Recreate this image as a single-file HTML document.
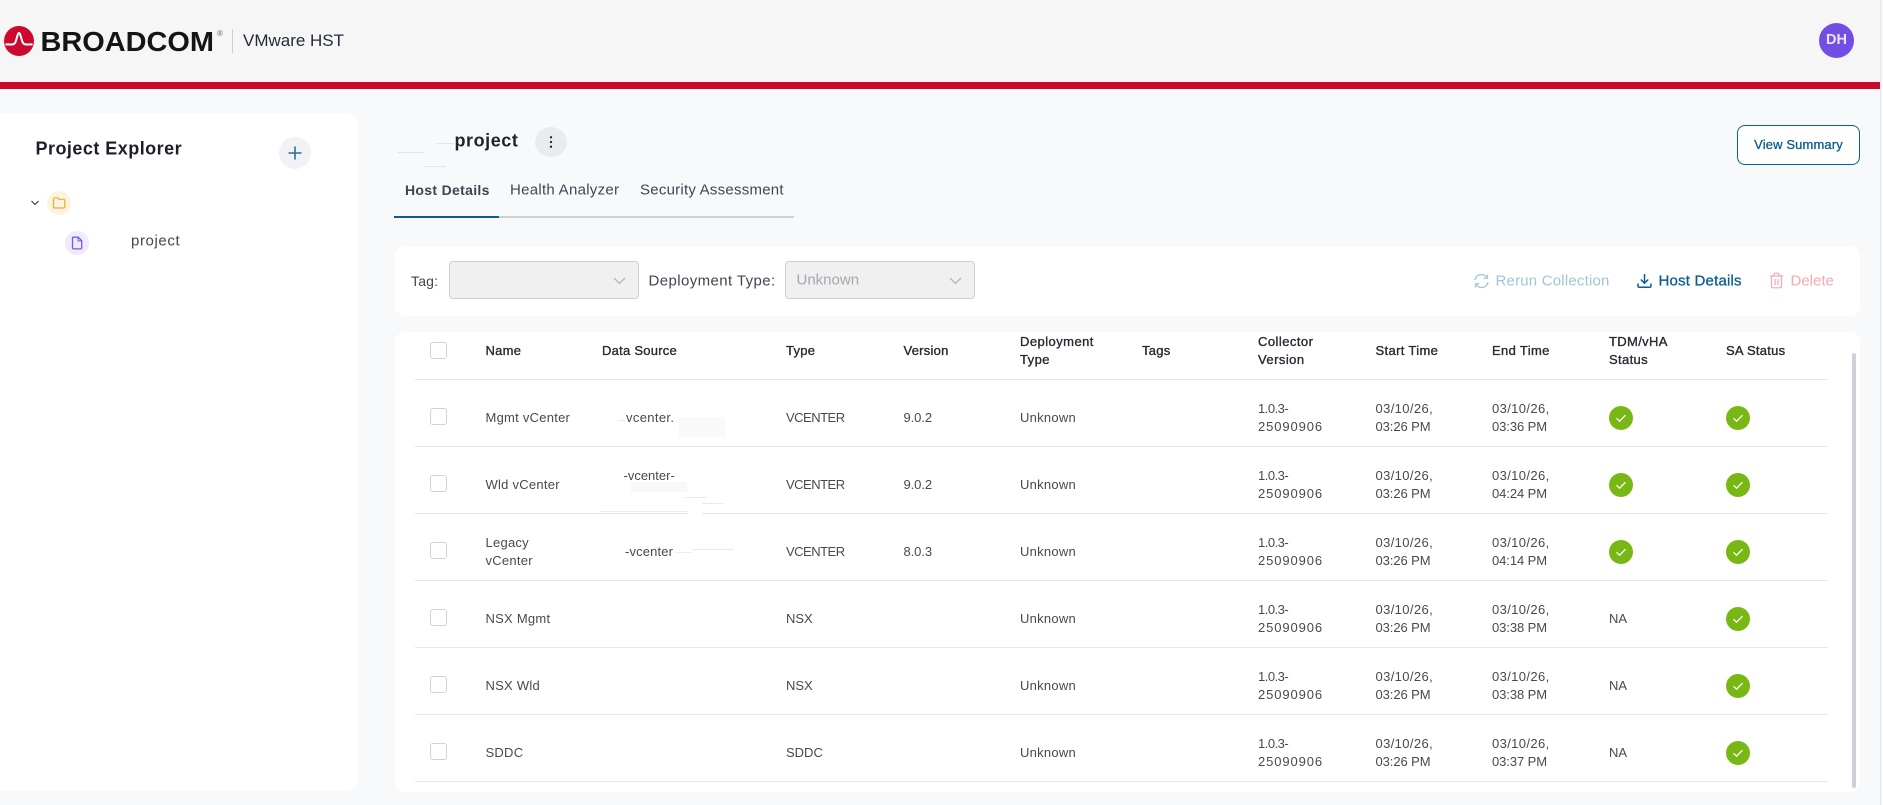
<!DOCTYPE html>
<html lang="en"><head><meta charset="utf-8"><title>VMware HST</title>
<style>
html,body{margin:0;padding:0;width:1883px;height:805px;overflow:hidden;background:#f8f9fb;font-family:"Liberation Sans",sans-serif;color:#3f4650}
.a{position:absolute}
.t{position:absolute;white-space:nowrap;transform:translateY(-50%)}
.panel{position:absolute;background:#fff;border-radius:12px}
.m{-webkit-text-stroke:.3px currentColor}
.row{position:absolute;left:395px;width:1465px;height:67px}
.row:after{content:"";position:absolute;left:20px;width:1413px;top:66px;height:1px;background:#e6e7ea}
.c{position:absolute;top:38px;transform:translateY(-50%);font-size:13px;line-height:18px;white-space:nowrap;color:#444a53}
.h{color:#262b33;-webkit-text-stroke:.35px #262b33;letter-spacing:.25px}
.cb{position:absolute;left:35px;top:28px;width:15px;height:15px;border:1.5px solid #ced2d8;border-radius:3px;background:#fff}
.ok{position:absolute;top:26px;width:24px;height:24px}
.n1{left:90.5px;letter-spacing:.25px}.n2{left:207px}.n3{left:391px}.n4{left:508.5px}.n5{left:625px}.n6{left:747px}.n7{left:863px}.n8{left:980.5px}.n9{left:1097px}.n10{left:1214px}.n11{left:1331px}
.dig{letter-spacing:.9px}
.vc{letter-spacing:-.5px}
.dt{letter-spacing:.37px}
.tm{letter-spacing:-.08px}
.sel{position:absolute;top:261px;height:36px;width:188px;background:#f0f0f0;border:1px solid #c9ced6;border-radius:4px}
.smear{position:absolute;background:#f6f7f8}
</style></head><body>

<div class="a" style="left:0;top:0;width:1883px;height:82px;background:#f6f6f6"></div>
<div class="a" style="left:0;top:82px;width:1880px;height:7px;background:#cb092f"></div>
<div class="a" style="left:1880px;top:0;width:1px;height:805px;background:#e6e6e6"></div>

<svg class="a" style="left:0;top:0" width="360" height="82" viewBox="0 0 360 82">
<circle cx="19" cy="41" r="15" fill="#cc092f"/>
<path d="M5.5 44.5C10 44 13.5 45.5 15 43C16.7 40 17.5 33 19 33C20.5 33 21.3 40 23 43C24.5 45.5 28 44 32.5 44.5" fill="none" stroke="#fff" stroke-width="2"/>
<text x="40.5" y="51" font-family="Liberation Sans" font-weight="700" font-size="28" fill="#151515" textLength="173.5" lengthAdjust="spacingAndGlyphs">BROADCOM</text>
<text x="217" y="36" font-family="Liberation Sans" font-size="8" fill="#666">®</text>
<rect x="232" y="29" width="1" height="24" fill="#c9ced6"/>
<text x="243" y="46" font-family="Liberation Sans" font-size="17" fill="#1f2b38" textLength="101" lengthAdjust="spacingAndGlyphs">VMware HST</text>
</svg>

<div class="a" style="left:1819px;top:23px;width:35px;height:35px;border-radius:50%;background:#724ee5;color:#e9e5fb;font-size:14.5px;font-weight:700;line-height:35px;text-align:center">DH</div>

<!-- sidebar -->
<div class="panel" style="left:-10px;top:113px;width:368px;height:678px"></div>
<div class="t" style="left:35.5px;top:148.500px;font-size:18px;font-weight:700;letter-spacing:.47px;color:#1b1f2a">Project Explorer</div>
<div class="a" style="left:279px;top:137px;width:32px;height:32px;border-radius:50%;background:#f0f2f5"></div>
<svg class="a" style="left:279px;top:137px" width="32" height="32"><path d="M16 9.500V22.500M9.500 16H22.500" stroke="#2b6f96" stroke-width="1.6"/></svg>
<svg class="a" style="left:29px;top:197px" width="12" height="12"><path d="M2.500 4L6 7.500L9.500 4" fill="none" stroke="#30353c" stroke-width="1.1"/></svg>
<div class="a" style="left:47px;top:191px;width:24px;height:24px;border-radius:50%;background:#fdf3e1"></div>
<svg class="a" style="left:47px;top:191px" width="24" height="24"><path d="M6.500 8C6.500 7.200 7 6.800 7.800 6.800H10.800L12 8.300H16.500C17.300 8.300 17.800 8.800 17.800 9.600V15.800C17.800 16.600 17.300 17 16.500 17H7.800C7 17 6.500 16.600 6.500 15.800Z" fill="none" stroke="#e9ae2c" stroke-width="1.2"/></svg>
<div class="a" style="left:65px;top:231px;width:24px;height:24px;border-radius:50%;background:#efeafc"></div>
<svg class="a" style="left:65px;top:231px" width="24" height="24"><path d="M7.500 7.300C7.500 6.600 8 6.200 8.600 6.200H13.200L16.700 9.700V16.800C16.700 17.500 16.200 17.900 15.600 17.900H8.600C8 17.900 7.500 17.500 7.500 16.800Z" fill="none" stroke="#7c55e9" stroke-width="1.3"/><path d="M13 6.500V9.900H16.500" fill="none" stroke="#7c55e9" stroke-width="1"/></svg>
<div class="t" style="left:131px;top:240.500px;font-size:15px;letter-spacing:.6px;color:#414853">project</div>

<!-- title -->
<div class="a" style="left:398px;top:152px;width:26px;height:1px;background:#e2e4e7"></div>
<div class="a" style="left:437px;top:143px;width:17px;height:1px;background:#e2e4e7"></div>
<div class="a" style="left:424px;top:166px;width:22px;height:1px;background:#e2e4e7"></div>
<div class="t" style="left:454.5px;top:140.500px;font-size:18px;font-weight:700;letter-spacing:.55px;color:#1e232c">project</div>
<div class="a" style="left:535px;top:127px;width:32px;height:30px;border-radius:50%;background:#e9ebee"></div>
<svg class="a" style="left:535px;top:127px" width="32" height="30"><circle cx="16" cy="10.300" r="1.150" fill="#222"/><circle cx="16" cy="15" r="1.150" fill="#222"/><circle cx="16" cy="19.700" r="1.150" fill="#222"/></svg>

<!-- tabs -->
<div class="t" style="left:405px;top:189.500px;font-size:14px;font-weight:700;letter-spacing:.32px;color:#3c444f">Host Details</div>
<div class="t" style="left:510px;top:189.500px;font-size:15px;letter-spacing:.28px;color:#3f4752">Health Analyzer</div>
<div class="t" style="left:640px;top:189.500px;font-size:15px;letter-spacing:.24px;color:#3f4752">Security Assessment</div>
<div class="a" style="left:394px;top:216px;width:400px;height:2px;background:#cdd0d7"></div>
<div class="a" style="left:394px;top:216px;width:105px;height:2px;background:#0b5f8e"></div>

<div class="a m" style="left:1737px;top:125px;width:121px;height:38px;border:1px solid #0b5f8e;border-radius:8px;background:#fff;color:#0b5f8e;font-size:13px;letter-spacing:.13px;line-height:38px;text-align:center">View Summary</div>

<!-- filter card -->
<div class="panel" style="left:395px;top:246px;width:1465px;height:70px;border-radius:10px"></div>
<div class="t" style="left:411px;top:280.500px;font-size:14px;letter-spacing:.2px;color:#3f4650">Tag:</div>
<div class="sel" style="left:449px"></div>
<svg class="a" style="left:612px;top:274px" width="15" height="14"><path d="M2 4L7.500 9.500L13 4" fill="none" stroke="#b2b6bd" stroke-width="1.3"/></svg>
<div class="t" style="left:648.500px;top:280.500px;font-size:15px;letter-spacing:.4px;color:#3f4650">Deployment Type:</div>
<div class="sel" style="left:785px"></div>
<div class="t" style="left:796.500px;top:279.500px;font-size:15px;color:#a3a8b0">Unknown</div>
<svg class="a" style="left:948px;top:274px" width="15" height="14"><path d="M2 4L7.500 9.500L13 4" fill="none" stroke="#b2b6bd" stroke-width="1.3"/></svg>

<svg class="a" style="left:1473px;top:273px" width="17" height="16"><path d="M2 7C2.500 3.500 5.200 1.500 8.300 1.500C10.700 1.500 12.700 2.600 14 4.700M15 9C14.500 12.500 11.800 14.500 8.700 14.500C6.300 14.500 4.300 13.400 3 11.300" fill="none" stroke="#a3c6da" stroke-width="1.300"/><path d="M14.500 1.500V5.200H10.800M2.500 14.500V10.800H6.200" fill="none" stroke="#a3c6da" stroke-width="1.300"/></svg>
<div class="t" style="left:1495.500px;top:280.500px;font-size:15px;letter-spacing:.2px;color:#a3c3d7">Rerun Collection</div>
<svg class="a" style="left:1637px;top:273px" width="15" height="16"><path d="M7.500 1V10M3.800 6.500L7.500 10.200L11.200 6.500" fill="none" stroke="#0b5f8e" stroke-width="1.500"/><path d="M1 10.500V12.800C1 13.800 1.500 14.300 2.500 14.300H12.500C13.500 14.300 14 13.800 14 12.800V10.500" fill="none" stroke="#0b5f8e" stroke-width="1.500"/></svg>
<div class="t m" style="left:1658.500px;top:280.500px;font-size:15px;letter-spacing:.2px;color:#0b5f8e">Host Details</div>
<svg class="a" style="left:1769px;top:272px" width="15" height="17"><path d="M1 4H14M5 4V2.300C5 1.600 5.500 1.200 6 1.200H9C9.500 1.200 10 1.600 10 2.300V4M2.500 4V14.500C2.500 15.300 3 15.800 3.800 15.800H11.200C12 15.800 12.500 15.300 12.500 14.500V4M6 7V13M9 7V13" fill="none" stroke="#f3a9ae" stroke-width="1.200"/></svg>
<div class="t" style="left:1790.500px;top:280.500px;font-size:15px;color:#f3a9ae">Delete</div>

<!-- table -->
<div class="panel" style="left:395px;top:332px;width:1465px;height:460px;border-radius:10px"></div>
<div class="a" style="left:1852px;top:353px;width:4px;height:435px;background:#cdd1d9;border-radius:2px"></div>

<div class="row" style="top:313px">
<div class="cb" style="top:29px"></div>
<div class="c h n1">Name</div><div class="c h n2">Data Source</div><div class="c h n3">Type</div><div class="c h n4">Version</div><div class="c h n5" style="letter-spacing:.45px">Deployment<br>Type</div><div class="c h n6">Tags</div><div class="c h n7" style="letter-spacing:.45px">Collector<br>Version</div><div class="c h n8" style="letter-spacing:.35px">Start Time</div><div class="c h n9" style="letter-spacing:.35px">End Time</div><div class="c h n10" style="letter-spacing:.35px">TDM/vHA<br>Status</div><div class="c h n11">SA Status</div>
</div>

<div class="row" style="top:380px">
<div class="cb"></div><div class="c n1">Mgmt vCenter</div><div class="c" style="left:231px;letter-spacing:.35px">vcenter.</div><div class="smear" style="left:284px;top:37px;width:46px;height:20px;background:#f9f9fa"></div><div class="a" style="left:224px;top:40px;width:7px;height:1px;background:#e8e9ec"></div><div class="c n3 vc">VCENTER</div><div class="c n4 tm">9.0.2</div><div class="c n5" style="letter-spacing:.25px">Unknown</div><div class="c n7"><span class="vc">1.0.3-</span><br><span class="dig">25090906</span></div><div class="c n8"><span class="dt">03/10/26,</span><br><span class="tm">03:26 PM</span></div><div class="c n9"><span class="dt">03/10/26,</span><br><span class="tm">03:36 PM</span></div>
<svg class="ok" style="left:1214px"><circle cx="12" cy="12" r="12" fill="#78b814"/><path d="M7.500 12.300L10.600 15.200L16.500 9.200" fill="none" stroke="#fff" stroke-width="1.300"/></svg>
<svg class="ok" style="left:1331px"><circle cx="12" cy="12" r="12" fill="#78b814"/><path d="M7.500 12.300L10.600 15.200L16.500 9.200" fill="none" stroke="#fff" stroke-width="1.300"/></svg>
</div>

<div class="row" style="top:447px">
<div class="cb"></div><div class="c n1">Wld vCenter</div><div class="c" style="left:228.5px;top:29px">-vcenter-</div><div class="smear" style="left:236px;top:35px;width:56px;height:10px;background:#f8f8f9"></div><div class="a" style="left:290px;top:50px;width:21px;height:1px;background:#e8e9ec"></div><div class="a" style="left:307px;top:56px;width:21px;height:1px;background:#e8e9ec"></div><div class="a" style="left:205px;top:64px;width:88px;height:1px;background:#eceef0"></div><div class="a" style="left:293px;top:66px;width:14px;height:1px;background:#fff;z-index:2"></div><div class="c n3 vc">VCENTER</div><div class="c n4 tm">9.0.2</div><div class="c n5" style="letter-spacing:.25px">Unknown</div><div class="c n7"><span class="vc">1.0.3-</span><br><span class="dig">25090906</span></div><div class="c n8"><span class="dt">03/10/26,</span><br><span class="tm">03:26 PM</span></div><div class="c n9"><span class="dt">03/10/26,</span><br><span class="tm">04:24 PM</span></div>
<svg class="ok" style="left:1214px"><circle cx="12" cy="12" r="12" fill="#78b814"/><path d="M7.500 12.300L10.600 15.200L16.500 9.200" fill="none" stroke="#fff" stroke-width="1.300"/></svg>
<svg class="ok" style="left:1331px"><circle cx="12" cy="12" r="12" fill="#78b814"/><path d="M7.500 12.300L10.600 15.200L16.500 9.200" fill="none" stroke="#fff" stroke-width="1.300"/></svg>
</div>

<div class="row" style="top:514px">
<div class="cb"></div><div class="c n1">Legacy<br>vCenter</div><div class="c" style="left:230px;letter-spacing:.15px">-vcenter</div><div class="a" style="left:279px;top:38px;width:18px;height:1px;background:#eceef0"></div><div class="a" style="left:297px;top:35px;width:42px;height:1px;background:#e8e9ec"></div><div class="c n3 vc">VCENTER</div><div class="c n4 tm">8.0.3</div><div class="c n5" style="letter-spacing:.25px">Unknown</div><div class="c n7"><span class="vc">1.0.3-</span><br><span class="dig">25090906</span></div><div class="c n8"><span class="dt">03/10/26,</span><br><span class="tm">03:26 PM</span></div><div class="c n9"><span class="dt">03/10/26,</span><br><span class="tm">04:14 PM</span></div>
<svg class="ok" style="left:1214px"><circle cx="12" cy="12" r="12" fill="#78b814"/><path d="M7.500 12.300L10.600 15.200L16.500 9.200" fill="none" stroke="#fff" stroke-width="1.300"/></svg>
<svg class="ok" style="left:1331px"><circle cx="12" cy="12" r="12" fill="#78b814"/><path d="M7.500 12.300L10.600 15.200L16.500 9.200" fill="none" stroke="#fff" stroke-width="1.300"/></svg>
</div>

<div class="row" style="top:581px">
<div class="cb"></div><div class="c n1">NSX Mgmt</div><div class="c n3">NSX</div><div class="c n5" style="letter-spacing:.25px">Unknown</div><div class="c n7"><span class="vc">1.0.3-</span><br><span class="dig">25090906</span></div><div class="c n8"><span class="dt">03/10/26,</span><br><span class="tm">03:26 PM</span></div><div class="c n9"><span class="dt">03/10/26,</span><br><span class="tm">03:38 PM</span></div><div class="c n10">NA</div>
<svg class="ok" style="left:1331px"><circle cx="12" cy="12" r="12" fill="#78b814"/><path d="M7.500 12.300L10.600 15.200L16.500 9.200" fill="none" stroke="#fff" stroke-width="1.300"/></svg>
</div>

<div class="row" style="top:648px">
<div class="cb"></div><div class="c n1">NSX Wld</div><div class="c n3">NSX</div><div class="c n5" style="letter-spacing:.25px">Unknown</div><div class="c n7"><span class="vc">1.0.3-</span><br><span class="dig">25090906</span></div><div class="c n8"><span class="dt">03/10/26,</span><br><span class="tm">03:26 PM</span></div><div class="c n9"><span class="dt">03/10/26,</span><br><span class="tm">03:38 PM</span></div><div class="c n10">NA</div>
<svg class="ok" style="left:1331px"><circle cx="12" cy="12" r="12" fill="#78b814"/><path d="M7.500 12.300L10.600 15.200L16.500 9.200" fill="none" stroke="#fff" stroke-width="1.300"/></svg>
</div>

<div class="row" style="top:715px">
<div class="cb"></div><div class="c n1">SDDC</div><div class="c n3">SDDC</div><div class="c n5" style="letter-spacing:.25px">Unknown</div><div class="c n7"><span class="vc">1.0.3-</span><br><span class="dig">25090906</span></div><div class="c n8"><span class="dt">03/10/26,</span><br><span class="tm">03:26 PM</span></div><div class="c n9"><span class="dt">03/10/26,</span><br><span class="tm">03:37 PM</span></div><div class="c n10">NA</div>
<svg class="ok" style="left:1331px"><circle cx="12" cy="12" r="12" fill="#78b814"/><path d="M7.500 12.300L10.600 15.200L16.500 9.200" fill="none" stroke="#fff" stroke-width="1.300"/></svg>
</div>

</body></html>
